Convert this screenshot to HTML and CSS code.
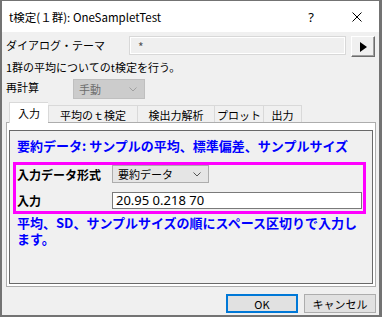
FILE: index.html
```html
<!DOCTYPE html>
<html lang="ja">
<head>
    <meta charset="UTF-8">
    <title>t検定(１群): OneSampletTest</title>
    <link rel="stylesheet" href="styles.css">
</head>
<body>
    <div class="window">
        <!-- Title bar -->
        <div class="titlebar">
            <span class="title">t検定(１群): OneSampletTest</span>
            <span class="caption-btn help">?</span>
            <span class="caption-btn close">
                <svg width="10" height="10" viewBox="0 0 10 10"><path d="M0.5 0.5 L9.5 9.5 M9.5 0.5 L0.5 9.5" stroke="#000" stroke-width="1" fill="none"/></svg>
            </span>
        </div>

        <div class="content">
            <div class="theme-row">
                <span class="theme-label">ダイアログ・テーマ</span>
                <div class="theme-box">*</div>
                <div class="arrow-btn">
                    <svg width="7" height="10" viewBox="0 0 7 10"><path d="M0 0 L7 5 L0 10 Z" fill="#000"/></svg>
                </div>
            </div>

            <p class="desc">1群の平均についてのt検定を行う。</p>

            <div class="recalc-row">
                <span class="recalc-label">再計算</span>
                <div class="combo combo-disabled">
                    <span>手動</span>
                    <svg width="8" height="5" viewBox="0 0 8 5"><path d="M0.5 0.5 L4 4 L7.5 0.5" stroke="#a0a0a0" fill="none"/></svg>
                </div>
            </div>

            <!-- Tabs -->
            <div class="tabs">
                <div class="tab active" style="width: 39px">入力</div>
                <div class="tab" style="width: 89px">平均のｔ検定</div>
                <div class="tab" style="width: 77px">検出力解析</div>
                <div class="tab" style="width: 49px">プロット</div>
                <div class="tab last" style="width: 39px">出力</div>
            </div>

            <div class="panel">
                <div class="page">
                    <p class="note heading">要約データ: サンプルの平均、標準偏差、サンプルサイズ</p>

                    <div class="highlight">
                        <div class="field-row">
                            <span class="field-label">入力データ形式</span>
                            <div class="combo combo-format">
                                <span>要約データ</span>
                                <svg width="8" height="5" viewBox="0 0 8 5"><path d="M0.5 0.5 L4 4 L7.5 0.5" stroke="#555" fill="none"/></svg>
                            </div>
                        </div>
                        <div class="field-row row-input">
                            <span class="field-label">入力</span>
                            <div class="text-input">20.95 0.218 70</div>
                        </div>
                    </div>

                    <div class="note note-block">
                        <span class="note-line">平均、SD、サンプルサイズの順にスペース区切りで入力し</span>
                        <span class="note-line">ます。</span>
                    </div>
                </div>
            </div>

            <div class="buttons">
                <div class="btn btn-default">OK</div>
                <div class="btn">キャンセル</div>
            </div>
        </div>
    </div>
</body>
</html>
```

FILE: styles.css
```css
* {
    margin: 0;
    padding: 0;
    box-sizing: border-box;
    font-family: 'Noto Sans CJK JP', sans-serif;
}

body {
    width: 382px;
    height: 317px;
    overflow: hidden;
    background: #f0f0f0;
}

.window {
    width: 382px;
    height: 317px;
    border-style: solid;
    border-color: #737373;
    border-width: 1px 3px 2px 2px;
    background: #f0f0f0;
    display: flex;
    flex-direction: column;
}

/* Title bar */
.titlebar {
    height: 31px;
    background: #fff;
    display: flex;
    align-items: center;
    padding-left: 7px;
    flex-shrink: 0;
}

.title {
    font-size: 11.5px;
    color: #000;
    white-space: nowrap;
}

.caption-btn {
    width: 46px;
    height: 31px;
    display: flex;
    align-items: center;
    justify-content: center;
    font-family: 'Noto Sans', sans-serif;
    font-size: 13px;
}

.help {
    margin-left: auto;
}

.close {
    width: 45px;
}

/* Body */
.content {
    padding: 0 3px 0 4px;
    display: flex;
    flex-direction: column;
}

.theme-row {
    display: flex;
    align-items: flex-start;
    margin-top: 4px;
    height: 21px;
    font-size: 11px;
}

.theme-label {
    width: 123px;
    line-height: 19px;
    white-space: nowrap;
}

.theme-box {
    width: 217px;
    height: 19px;
    border: 1px solid #d8d8d8;
    box-shadow: inset 0 0 0 1px #fff;
    background: #efefef;
    padding-left: 8px;
    font-size: 12px;
    line-height: 19px;
    color: #555;
}

.arrow-btn {
    width: 24px;
    height: 21px;
    margin-left: 5px;
    border: 1px solid;
    border-color: #fff #6d6d6d #6d6d6d #fff;
    box-shadow: inset -1px -1px 0 #a0a0a0;
    display: flex;
    align-items: center;
    justify-content: center;
}

.desc {
    font-size: 11px;
    line-height: 14px;
    margin-top: 3px;
    white-space: nowrap;
}

.recalc-row {
    display: flex;
    margin-top: 5px;
    height: 20px;
    font-size: 11px;
}

.recalc-label {
    width: 67px;
    line-height: 17px;
}

.combo {
    display: flex;
    align-items: center;
    justify-content: space-between;
    font-size: 11px;
    padding: 0 7px 0 5px;
}

.combo-disabled {
    width: 72px;
    height: 20px;
    background: #cccccc;
    border: 1px solid #bfbfbf;
    color: #6d6d6d;
}

/* Tabs */
.tabs {
    display: flex;
    height: 21px;
    margin-top: 3px;
    margin-left: 3px;
    margin-bottom: -1px;
    font-size: 11px;
}

.tab {
    height: 18px;
    margin-top: 3px;
    border: 1px solid #d9d9d9;
    border-right: none;
    border-bottom: none;
    background: #f0f0f0;
    display: flex;
    align-items: center;
    justify-content: center;
    white-space: nowrap;
}

.tab.last {
    border-right: 1px solid #d9d9d9;
}

.tab.active {
    height: 21px;
    margin-top: 0;
    background: #fff;
    position: relative;
    z-index: 1;
}

.panel {
    height: 165px;
    border: 1px solid #adadad;
    background: #fff;
    padding: 7px 2px 2px 2px;
}

.page {
    height: 100%;
    border: 1px solid #696969;
    background: #f0f0f0;
}

.note {
    color: #0000ff;
    font-weight: bold;
    font-size: 13px;
    line-height: 15px;
    padding-left: 7px;
    white-space: nowrap;
}

.note.heading {
    margin-top: 7px;
    line-height: 16px;
}

.note-block {
    display: flex;
    flex-direction: column;
    margin-top: 1px;
}

.note-line {
    display: block;
    height: 16px;
    line-height: 16px;
}

.highlight {
    margin: 8px 0 0 3px;
    width: 353px;
    border: 3px solid #ff00ff;
    padding: 0 1px 2px 1px;
    display: flex;
    flex-direction: column;
    gap: 9px;
}

.field-row {
    display: flex;
    align-items: center;
    height: 18px;
}

.field-row.row-input {
    height: 17px;
}

.field-label {
    width: 95px;
    font-size: 12px;
    font-weight: bold;
    white-space: nowrap;
}

.combo-format {
    width: 97px;
    height: 18px;
    background: #e5e5e5;
    border: 1px solid #adadad;
    padding-left: 5px;
}

.text-input {
    width: 250px;
    height: 17px;
    border: 1px solid #7a7a7a;
    background: #fff;
    padding-left: 3px;
    font-family: 'Noto Sans', sans-serif;
    font-size: 13px;
    line-height: 15px;
}

/* Dialog buttons */
.buttons {
    display: flex;
    justify-content: flex-end;
    gap: 6px;
    margin-top: 7px;
}

.btn {
    width: 72px;
    height: 19px;
    background: #e1e1e1;
    border: 1px solid #adadad;
    font-size: 11px;
    display: flex;
    align-items: center;
    justify-content: center;
}

.btn-default {
    border: 2px solid #0078d7;
}
```
